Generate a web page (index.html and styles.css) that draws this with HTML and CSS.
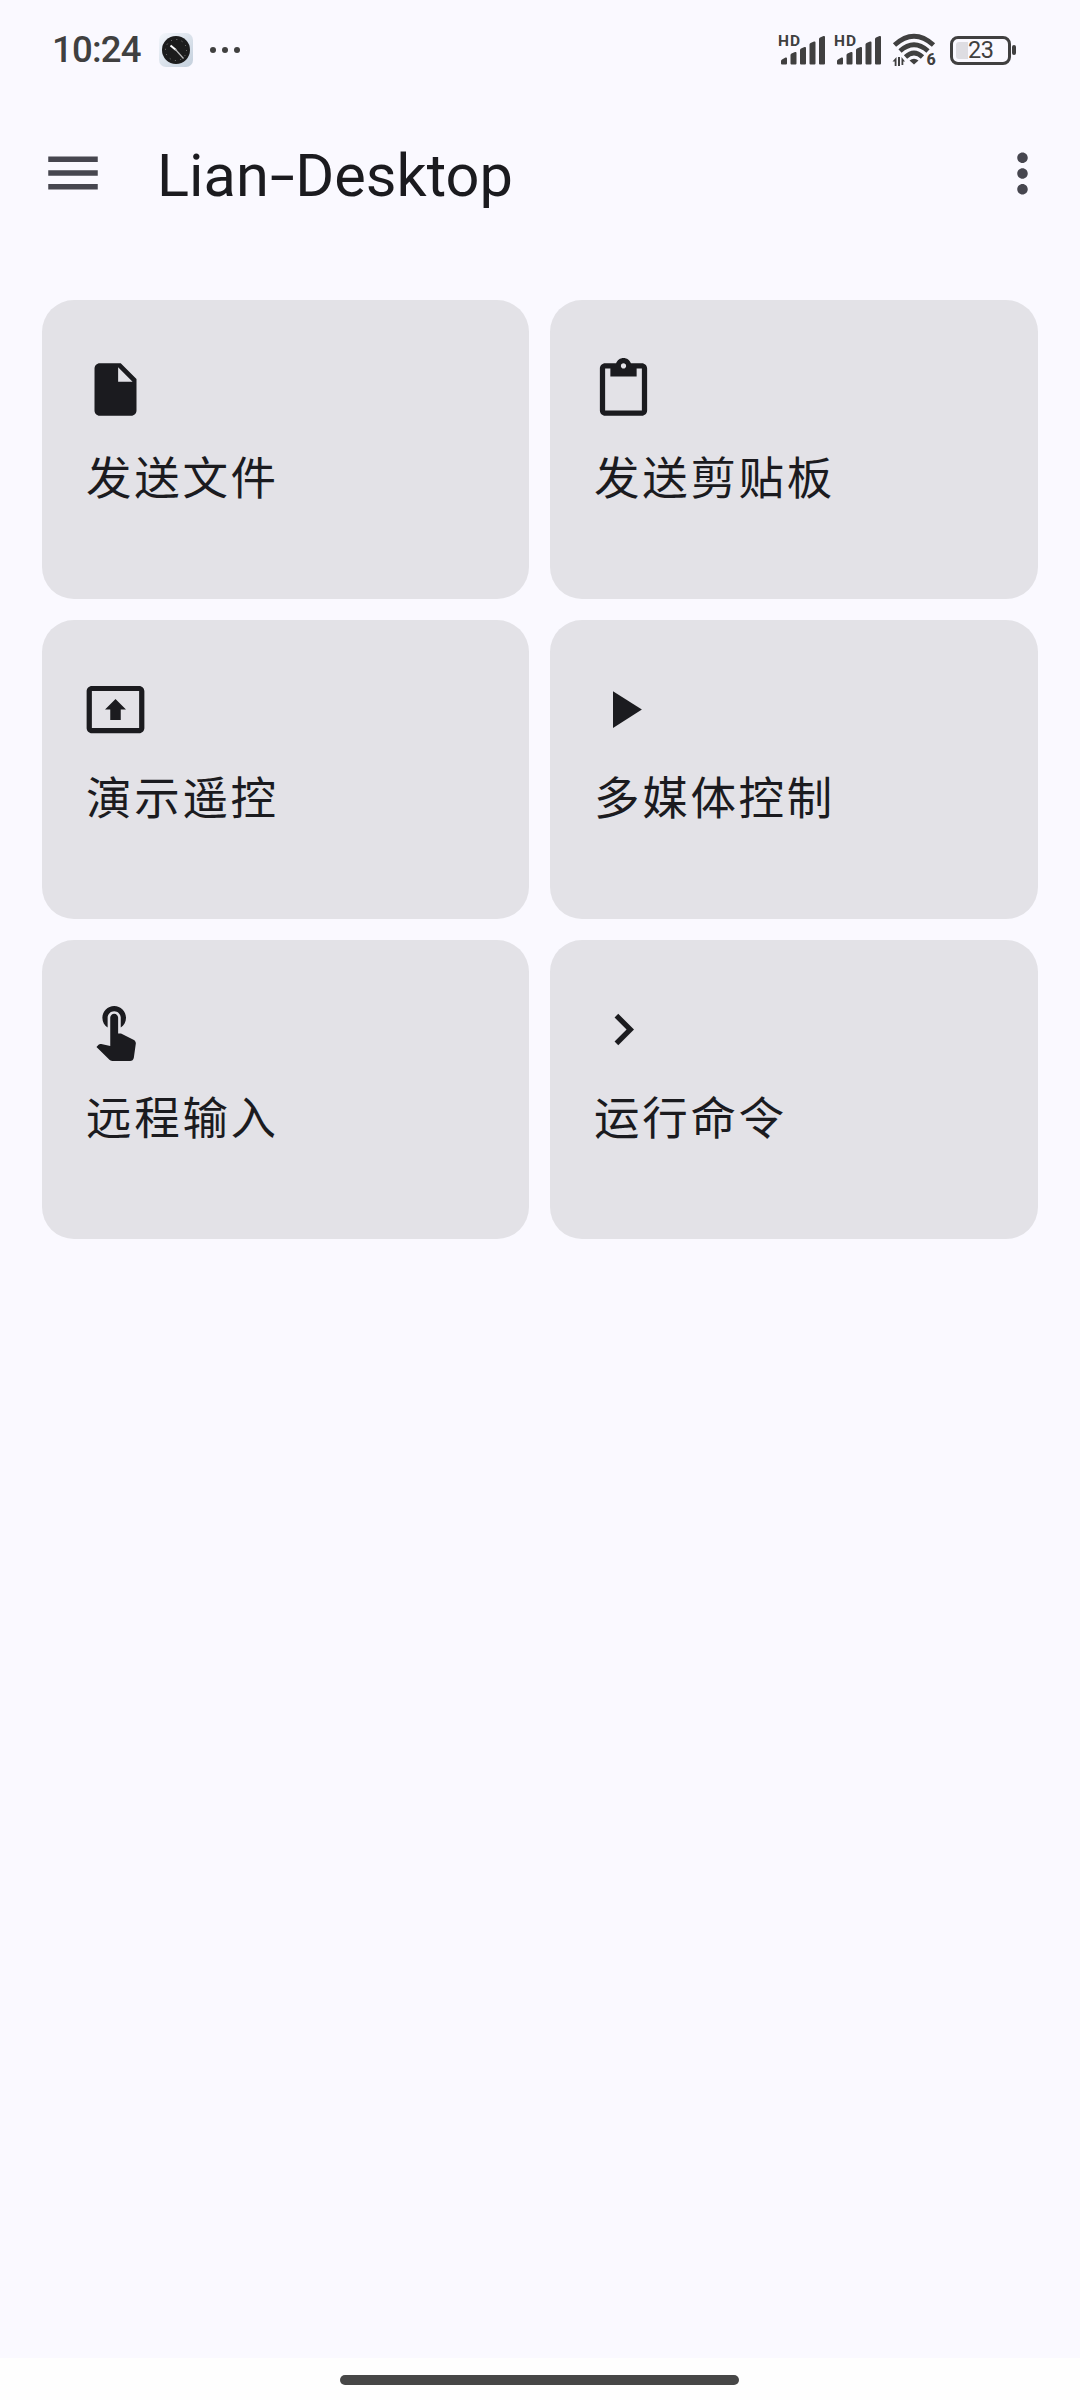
FILE: index.html
```html
<!DOCTYPE html>
<html lang="zh-CN">
  <head>
    <meta charset="UTF-8" />
    <meta name="viewport" content="width=device-width, initial-scale=1.0" />
    <title>Lian-Desktop</title>
    <link rel="stylesheet" href="styles.css">
  </head>
  <body>
    <div class="status-bar">
      <span class="time">10:24</span>
      <svg class="clock-app" viewBox="0 0 34 34">
        <defs>
          <linearGradient id="clockBg" x1="0" y1="0" x2="1" y2="1">
            <stop offset="0" stop-color="#f4f7fc" />
            <stop offset="1" stop-color="#c3cfdc" />
          </linearGradient>
        </defs>
        <rect width="34" height="34" rx="7" fill="url(#clockBg)" />
        <circle cx="17" cy="17" r="14" fill="#1c1c1c" />
        <circle cx="17" cy="17" r="10.5" fill="none" stroke="#888" stroke-width="1" stroke-dasharray="1 4.5" />
        <path d="M11.5 12.5L17 17" stroke="#fff" stroke-width="2" />
        <path d="M16 16l8.5 9.5" stroke="#bbb" stroke-width="1.2" />
      </svg>
      <svg class="more-notice" viewBox="0 0 30 6">
        <circle cx="3" cy="3" r="3" /><circle cx="15" cy="3" r="3" /><circle cx="27" cy="3" r="3" />
      </svg>
      <div class="status-right">
        <svg class="signal" viewBox="0 0 48 32">
          <text class="hd" x="-1" y="12" textLength="22">HD</text>
          <path d="M2 27q0-1 1-1.500l3.500-2q1.500-.5 1.500 1v5q0 1-1 1h-4q-1 0-1-1zM11.500 21q0-1 1-1.500l3.500-1.500q1.500-.5 1.500 1v10.500q0 1-1 1h-4q-1 0-1-1zM21 16q0-1 1-1.500l3.500-1.500q1.500-.5 1.500 1v15.500q0 1-1 1h-4q-1 0-1-1zM30.500 10.500q0-1 1-1.500l3.500-1.500q1.500-.5 1.500 1v21q0 1-1 1h-4q-1 0-1-1zM40 5q0-1 1-1.500l3.500-1.500q1.500-.5 1.500 1v26.500q0 1-1 1h-4q-1 0-1-1z" />
        </svg>
        <svg class="signal" viewBox="0 0 48 32">
          <text class="hd" x="-1" y="12" textLength="22">HD</text>
          <path d="M2 27q0-1 1-1.500l3.500-2q1.500-.5 1.500 1v5q0 1-1 1h-4q-1 0-1-1zM11.500 21q0-1 1-1.500l3.500-1.500q1.500-.5 1.500 1v10.500q0 1-1 1h-4q-1 0-1-1zM21 16q0-1 1-1.500l3.500-1.500q1.500-.5 1.500 1v15.500q0 1-1 1h-4q-1 0-1-1zM30.500 10.500q0-1 1-1.500l3.500-1.500q1.500-.5 1.500 1v21q0 1-1 1h-4q-1 0-1-1zM40 5q0-1 1-1.500l3.500-1.500q1.500-.5 1.500 1v26.500q0 1-1 1h-4q-1 0-1-1z" />
        </svg>
        <svg class="wifi" viewBox="0 0 46 34">
          <path class="arc" d="M2.500 12Q22 -5.500 41.500 12M8 18Q22 5.500 36 18M13.500 24Q22 16 30.500 24" />
          <path d="M17.500 27.500q4.500-3.500 9 0l-4.500 4z" />
          <path d="M.5 28.500l4-4.500v9h-1.800v-4.500zM6 24h2v9H6zM9.500 24l3.500 4.500h-1.700v3.500H9.500z" />
          <text class="wifi-gen" x="34.500" y="32">6</text>
        </svg>
        <div class="battery"><span class="level"></span><span class="percent">23</span></div>
        <div class="battery-cap"></div>
      </div>
    </div>

    <div class="app-bar">
      <svg class="menu-icon" viewBox="0 0 24 24">
        <path d="M3 18h18v-2H3v2zm0-5h18v-2H3v2zm0-7v2h18V6H3z" />
      </svg>
      <h1>Lian<span class="dash">-</span>Desktop</h1>
      <svg class="more-icon" viewBox="0 0 24 24">
        <path d="M12 8c1.100 0 2-.9 2-2s-.9-2-2-2-2 .9-2 2 .9 2 2 2zm0 2c-1.100 0-2 .9-2 2s.9 2 2 2 2-.9 2-2-.9-2-2-2zm0 6c-1.100 0-2 .9-2 2s.9 2 2 2 2-.9 2-2-.9-2-2-2z" />
      </svg>
    </div>

    <div class="grid">
      <div class="card">
        <svg class="icon" viewBox="0 0 24 24">
          <path d="M6 2c-1.100 0-1.990.9-1.990 2L4 20c0 1.100.89 2 1.990 2H18c1.100 0 2-.9 2-2V8l-6-6H6zm7 7V3.500L18.500 9H13z" />
        </svg>
        <p>发送文件</p>
      </div>
      <div class="card">
        <svg class="icon" viewBox="0 0 24 24">
          <path d="M19 2h-4.180C14.400.84 13.300 0 12 0c-1.300 0-2.400.84-2.820 2H5c-1.100 0-2 .9-2 2v16c0 1.100.9 2 2 2h14c1.100 0 2-.9 2-2V4c0-1.100-.9-2-2-2zm-7 2c-.55 0-1-.45-1-1s.45-1 1-1 1 .45 1 1-.45 1-1 1zm7 16H5V4h2v3h10V4h2v16z" />
        </svg>
        <p>发送剪贴板</p>
      </div>
      <div class="card">
        <svg class="icon" viewBox="0 0 24 24">
          <path d="M21 3H3c-1.110 0-2 .89-2 2v14c0 1.110.89 2 2 2h18c1.110 0 2-.89 2-2V5c0-1.110-.89-2-2-2zm0 16.020H3V4.980h18v14.040zM10 12H8l4-4 4 4h-2v4h-4v-4z" />
        </svg>
        <p>演示遥控</p>
      </div>
      <div class="card">
        <svg class="icon" viewBox="0 0 24 24">
          <path d="M8 5v14l11-7z" />
        </svg>
        <p>多媒体控制</p>
      </div>
      <div class="card">
        <svg class="icon" viewBox="0 0 24 24">
          <path d="M9 11.240V7.500C9 6.120 10.120 5 11.500 5S14 6.120 14 7.500v3.740c1.210-.81 2-2.180 2-3.740C16 5.010 13.990 3 11.500 3S7 5.010 7 7.500c0 1.560.79 2.930 2 3.740zm9.840 4.630l-4.540-2.260c-.17-.07-.35-.11-.54-.11H13v-6c0-.83-.67-1.500-1.500-1.500S10 6.670 10 7.500v10.740l-3.430-.72c-.08-.01-.15-.03-.24-.03-.31 0-.59.13-.79.33l-.79.8 4.940 4.940c.27.27.65.44 1.060.44h6.790c.75 0 1.330-.55 1.440-1.280l.75-5.270c.01-.07.02-.14.02-.2 0-.62-.38-1.160-.91-1.380z" />
        </svg>
        <p>远程输入</p>
      </div>
      <div class="card">
        <svg class="icon" viewBox="0 0 24 24">
          <path d="M10 6L8.590 7.410 13.170 12l-4.580 4.590L10 18l6-6z" />
        </svg>
        <p>运行命令</p>
      </div>
    </div>

    <div class="nav-bar"><div class="handle"></div></div>
  </body>
</html>
```
FILE: styles.css
```css
* {
  box-sizing: border-box;
}
body {
  margin: 0;
  height: 2400px;
  display: flex;
  flex-direction: column;
  background: #faf9ff;
  color: #1b1b1f;
  font-family: Roboto, "Noto Sans CJK SC", sans-serif;
}
svg {
  display: block;
  flex: none;
  overflow: visible;
}

.status-bar {
  height: 100px;
  padding: 0 64px 0 52px;
  display: flex;
  align-items: center;
  color: #404040;
  fill: #404040;
}
.time {
  width: 107px;
  font-size: 36.500px;
  font-weight: 500;
  line-height: 44px;
  letter-spacing: -0.800px;
}
.clock-app {
  width: 34px;
  height: 34px;
}
.more-notice {
  width: 30px;
  height: 6px;
  margin-left: 17px;
}
.status-right {
  margin-left: auto;
  display: flex;
  align-items: center;
}
.signal {
  width: 48px;
  height: 32px;
  margin-right: 8px;
}
.hd {
  font-size: 15.500px;
  font-weight: 700;
}
.wifi {
  width: 46px;
  height: 34px;
  margin: 0 12px 0 1px;
}
.arc {
  fill: none;
  stroke: #404040;
  stroke-width: 4.800;
}
.wifi-gen {
  font-size: 16px;
  font-weight: 800;
}
.battery {
  width: 61px;
  height: 29px;
  padding-left: 3px;
  display: flex;
  align-items: center;
  border: 3px solid #404040;
  border-radius: 8px;
}
.level {
  width: 12px;
  height: 17px;
  border-radius: 3px 0 0 3px;
  background: #dedde2;
}
.percent {
  font-size: 23.500px;
  line-height: 24px;
  letter-spacing: -0.500px;
}
.battery-cap {
  width: 4px;
  height: 10px;
  margin-left: 1px;
  border-radius: 2px;
  background: #404040;
}

.app-bar {
  height: 146px;
  padding: 0 26px 0 40px;
  display: flex;
  align-items: center;
  fill: #46464f;
}
.menu-icon {
  width: 66px;
  height: 66px;
}
.more-icon {
  width: 63px;
  height: 63px;
  margin-left: auto;
}
h1 {
  margin: 5px 0 0 51px;
  font-size: 59.500px;
  font-weight: 400;
  line-height: 76px;
}
.dash {
  display: inline-block;
  transform: scaleX(1.500);
  margin: 0 5px;
}

.grid {
  padding: 54px 42px 0;
  display: grid;
  grid-template-columns: 487px 488px;
  grid-auto-rows: 299px;
  gap: 21px;
}
.card {
  padding: 58px 42px 0;
  border-radius: 32px;
  background: #e3e2e7;
  fill: #1b1b1f;
}
.icon {
  width: 63px;
  height: 63px;
}
.card p {
  margin: 23px 0 0 2px;
  font-family: "Noto Sans CJK SC", sans-serif;
  font-size: 45.500px;
  font-weight: 400;
  line-height: 62px;
  letter-spacing: 2.700px;
}

.nav-bar {
  height: 42px;
  margin-top: auto;
  padding: 17px 0 0 340px;
  background: #fefefe;
}
.handle {
  width: 399px;
  height: 10px;
  border-radius: 5px;
  background: #474747;
}
```
